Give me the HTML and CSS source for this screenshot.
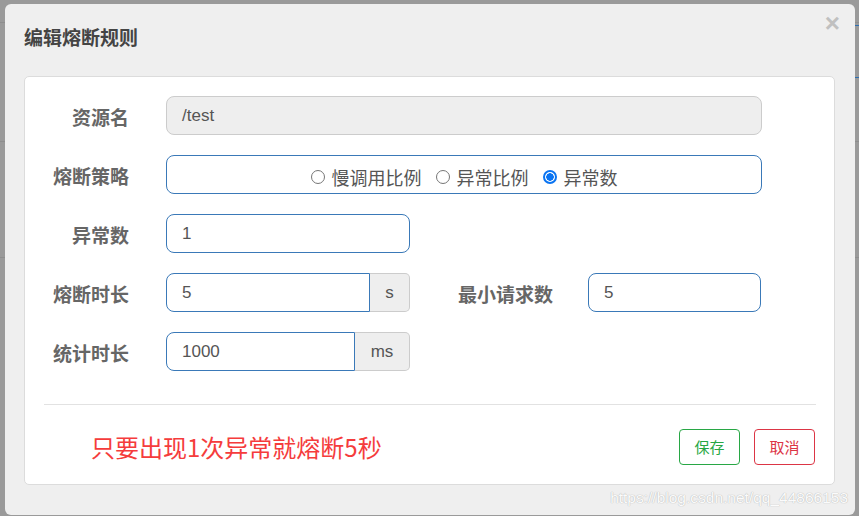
FILE: index.html
```html
<!DOCTYPE html>
<html lang="zh">
<head>
<meta charset="utf-8">
<title>编辑熔断规则</title>
<link rel="stylesheet" href="styles.css">
</head>
<body>
<div class="backdrop">
  <div class="modal">
    <div class="modal-header">
      <h3 class="modal-title">编辑熔断规则</h3>
      <span class="close">&times;</span>
    </div>
    <div class="card">
      <div class="form">
        <div class="row">
          <label class="lbl">资源名</label>
          <div class="input disabled wide">/test</div>
        </div>
        <div class="row">
          <label class="lbl">熔断策略</label>
          <div class="input wide radios">
            <span class="radio"><span class="dot"></span>慢调用比例</span>
            <span class="radio"><span class="dot"></span>异常比例</span>
            <span class="radio"><span class="dot on"></span>异常数</span>
          </div>
        </div>
        <div class="row">
          <label class="lbl">异常数</label>
          <div class="input short">1</div>
        </div>
        <div class="row">
          <label class="lbl">熔断时长</label>
          <div class="group">
            <div class="input grp-input">5</div>
            <div class="addon addon-s">s</div>
          </div>
          <label class="lbl lbl2">最小请求数</label>
          <div class="input small">5</div>
        </div>
        <div class="row">
          <label class="lbl">统计时长</label>
          <div class="group">
            <div class="input grp-input">1000</div>
            <div class="addon addon-ms">ms</div>
          </div>
        </div>
      </div>
      <div class="divider"></div>
      <div class="footer">
        <span class="note">只要出现1次异常就熔断5秒</span>
        <div class="buttons">
          <button class="btn btn-save">保存</button>
          <button class="btn btn-cancel">取消</button>
        </div>
      </div>
    </div>
  </div>
  <div class="watermark">https://blog.csdn.net/qq_44866153</div>
</div>
</body>
</html>
```
FILE: styles.css
```css
* { box-sizing: border-box; }
html, body {
  margin: 0;
  padding: 0;
}
body {
  width: 859px;
  height: 516px;
  overflow: hidden;
  background-color: #9a9a9a;
  background-image:
    linear-gradient(#8e8e8e, #8e8e8e),
    linear-gradient(#8e8e8e, #8e8e8e),
    linear-gradient(#8e8e8e, #8e8e8e),
    linear-gradient(#2f6fb0, #2f6fb0),
    linear-gradient(#2f6fb0, #2f6fb0);
  background-repeat: no-repeat;
  background-size: 859px 1px, 859px 1px, 859px 1px, 10px 1px, 10px 1px;
  background-position: 0 22px, 0 141px, 0 257px, 852px 25px, 852px 77px;
  font-family: "Noto Sans CJK SC", "Liberation Sans", sans-serif;
}
.backdrop {
  position: relative;
  width: 859px;
  height: 516px;
  padding: 4px 4px 0 5px;
}
.modal {
  width: 850px;
  height: 511px;
  background: #efefef;
  border-radius: 6px;
  display: flex;
  flex-direction: column;
}
.modal-header {
  height: 72px;
  display: flex;
  align-items: flex-start;
  justify-content: space-between;
  padding: 0 15px 0 19px;
}
.modal-title {
  margin: 19px 0 0;
  font-size: 19px;
  line-height: 28px;
  font-weight: bold;
  color: #444;
}
.close {
  margin-top: 4px;
  font-family: "Liberation Sans", sans-serif;
  font-size: 26px;
  line-height: 30px;
  font-weight: bold;
  color: #c0c0c0;
}
.card {
  margin: 0 20px 0 19px;
  height: 409px;
  background: #fff;
  border: 1px solid #dcdcdc;
  border-radius: 5px;
  display: flex;
  flex-direction: column;
}
.form {
  padding-top: 19px;
  display: flex;
  flex-direction: column;
  gap: 20px;
}
.row {
  display: flex;
  align-items: center;
  height: 39px;
}
.lbl {
  width: 104px;
  margin-right: 37px;
  text-align: right;
  font-size: 19px;
  font-weight: bold;
  color: #666;
  line-height: 39px;
  padding-top: 2px;
  white-space: nowrap;
}
.lbl2 {
  width: 95px;
  margin-left: 48px;
  margin-right: 35px;
  text-align: left;
}
.input {
  height: 39px;
  border: 1px solid #3a79b8;
  border-radius: 8px;
  padding: 0 15px;
  font-family: "Liberation Sans", sans-serif;
  font-size: 17px;
  color: #555;
  display: flex;
  align-items: center;
  background: #fff;
}
.input.disabled {
  background: #eee;
  border-color: #ccc;
}
.wide { width: 596px; }
.short { width: 244px; }
.small { width: 173px; }
.radios {
  justify-content: center;
  gap: 14px;
  font-family: "Noto Sans CJK SC", sans-serif;
  font-size: 18px;
  color: #555;
  padding-top: 4px;
}
.radio {
  display: inline-flex;
  align-items: center;
  gap: 7px;
}
.dot {
  width: 14px;
  height: 14px;
  border: 1px solid #767676;
  border-radius: 50%;
  display: inline-block;
  background: #fff;
}
.dot.on {
  border: 2px solid #0a74f2;
  background: radial-gradient(circle, #0a74f2 0 3.5px, #fff 4px);
}
.group {
  display: flex;
  width: 244px;
  height: 39px;
}
.grp-input {
  flex: 1;
  border-radius: 8px 0 0 8px;
}
.addon {
  height: 39px;
  background: #eee;
  border: 1px solid #ccc;
  border-left: none;
  border-radius: 0 5px 5px 0;
  display: flex;
  align-items: center;
  justify-content: center;
  font-family: "Liberation Sans", sans-serif;
  font-size: 17px;
  color: #555;
}
.addon-s { width: 40px; }
.addon-ms { width: 55px; }
.divider {
  margin: 33px 18px 0 19px;
  height: 1px;
  background: #e2e2e2;
}
.footer {
  flex: 1;
  display: flex;
  align-items: center;
  justify-content: space-between;
  padding: 4px 19px 0 66px;
}
.note {
  font-size: 24px;
  color: #f53c3c;
  line-height: 32px;
}
.buttons {
  display: flex;
  gap: 14px;
}
.btn {
  width: 61px;
  height: 36px;
  background: #fff;
  border-radius: 4px;
  font-family: "Noto Sans CJK SC", sans-serif;
  font-size: 15px;
  padding: 0;
  cursor: pointer;
}
.btn-save {
  border: 1px solid #28a745;
  color: #28a745;
}
.btn-cancel {
  border: 1px solid #dc3545;
  color: #dc3545;
}
.watermark {
  position: absolute;
  right: 11px;
  bottom: 9px;
  font-family: "Liberation Sans", sans-serif;
  font-size: 15.5px;
  color: #fbfbfb;
  text-shadow: 0 0 1px #b5b5b5, 0 0 1px #c5c5c5;
}
```
